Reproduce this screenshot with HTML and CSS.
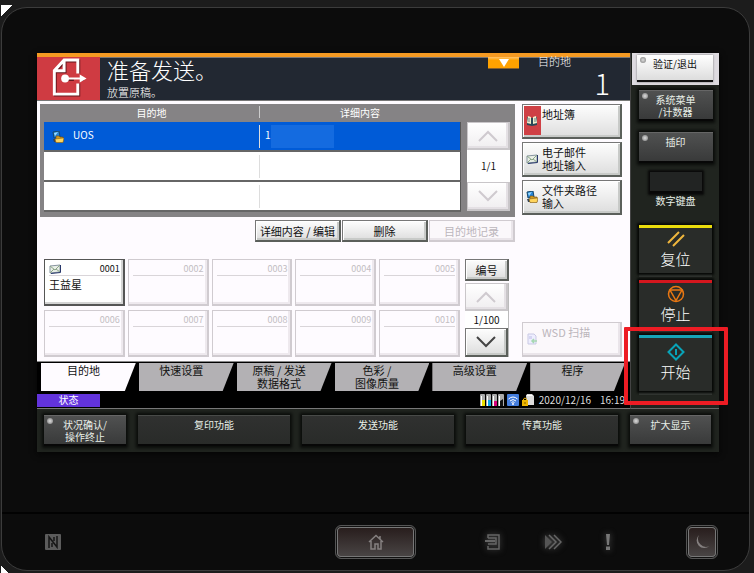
FILE: index.html
```html
<!DOCTYPE html>
<html lang="zh-CN">
<head>
<meta charset="utf-8">
<title>准备发送</title>
<link rel="stylesheet" href="styles.css">
</head>
<body>
<svg class="defs" aria-hidden="true">
  <symbol id="mail" viewBox="0 0 12 10"><path d="M1 2l10-1v7l-10 1z" fill="#e9efe6" stroke="#8794a0"/><path d="M1 2l5 4 5-5M1 9l4-4M11 8L7 5" fill="none" stroke="#8ba588"/><path d="M11.5 1v7.5L2 9.5" fill="none" stroke="#28376b"/></symbol>
  <symbol id="folder" viewBox="0 0 12 12"><path d="M1 1l6-1 1 6-6 1z" fill="#2784d8" stroke="#174768"/><path d="M2 2l4-1-3 4z" fill="#9adcff"/><path d="M1 8h3v3H2z" fill="#354355"/><path d="M4 5h3l1 1h3v5H4z" fill="#d39a1d" stroke="#6f4c10" stroke-width=".6"/><path d="M3 8l8-1 1 0-1 4.500H4z" fill="#ffd55d" stroke="#8a6117" stroke-width=".6"/></symbol>
  <symbol id="up" viewBox="0 0 20 12"><path d="M1 11l9-9 9 9" fill="none" stroke="currentColor" stroke-width="2"/></symbol>
  <symbol id="down" viewBox="0 0 20 12"><path d="M1 1l9 9 9-9" fill="none" stroke="currentColor" stroke-width="2"/></symbol>
</svg>
<main class="device">
  <section class="screen">
    <div class="display">
      <header class="header">
        <svg class="send-icon" viewBox="0 0 63 44" aria-hidden="true"><g transform="translate(1 1)" fill="none" stroke="#65171d" stroke-width="3"><path d="M27 3h14v35H17V14zM27 3v11H17M29 22h17"/></g><path d="M27 3h14v35H17V14zM27 3v11H17" fill="none" stroke="#fff" stroke-width="3"/><path d="M37 17h8v10h-8z" fill="#cf3b42"/><circle cx="28" cy="22" r="4" fill="#fff"/><path d="M28 21h15v-3l7 4-7 4v-3H28z" fill="#fff"/></svg>
        <div class="heading"><h1>准备发送。</h1><p>放置原稿。</p></div>
        <button class="expand" aria-label="展开"><svg viewBox="0 0 10 8"><path d="M0 0h10L5 8z" fill="#fff"/></svg></button>
        <div class="count"><span>目的地</span><strong>1</strong></div>
      </header>
      <div class="content">
        <div class="left">
          <div class="list-panel">
            <table class="list">
              <thead><tr><th>目的地</th><th>详细内容</th></tr></thead>
              <tbody>
                <tr class="selected"><td><svg class="row-icon"><use href="#folder"/></svg>UOS</td><td>1<span class="mask"></span></td></tr>
                <tr><td></td><td></td></tr>
                <tr><td></td><td></td></tr>
              </tbody>
            </table>
            <div class="pager">
              <button class="key faded" aria-label="上一页"><svg class="arrow"><use href="#up"/></svg></button>
              <span>1/1</span>
              <button class="key faded" aria-label="下一页"><svg class="arrow"><use href="#down"/></svg></button>
            </div>
          </div>
          <div class="toolbar">
            <button class="key">详细内容 / 编辑</button><button class="key">删除</button><button class="key off">目的地记录</button>
          </div>
          <div class="book">
            <div class="cells">
              <button class="cell filled"><span class="num"><svg class="cell-icon"><use href="#mail"/></svg>0001</span><span>王益星</span></button>
              <button class="cell"><span class="num">0002</span></button>
              <button class="cell"><span class="num">0003</span></button>
              <button class="cell"><span class="num">0004</span></button>
              <button class="cell"><span class="num">0005</span></button>
              <button class="cell"><span class="num">0006</span></button>
              <button class="cell"><span class="num">0007</span></button>
              <button class="cell"><span class="num">0008</span></button>
              <button class="cell"><span class="num">0009</span></button>
              <button class="cell"><span class="num">0010</span></button>
            </div>
            <div class="book-nav">
              <button class="key">编号</button>
              <div class="pager small">
                <button class="key faded" aria-label="上一页"><svg class="arrow"><use href="#up"/></svg></button>
                <span>1/100</span>
                <button class="key next" aria-label="下一页"><svg class="arrow"><use href="#down"/></svg></button>
              </div>
            </div>
          </div>
        </div>
        <div class="sources">
          <button class="key source address"><svg class="src-icon" viewBox="0 0 12 12"><path d="M1 2l5 1 5-1v8l-5 1-5-1z" fill="#294858"/><path d="M2 1l3 1v7L1 8zM7 2l3-1 1 7-4 1z" fill="#f1eecb"/><path d="M3 3v4M9 3v4" stroke="#627d8b"/></svg><span>地址簿</span></button>
          <button class="key source"><svg class="src-icon"><use href="#mail"/></svg><span>电子邮件<br>地址输入</span></button>
          <button class="key source"><svg class="src-icon"><use href="#folder"/></svg><span>文件夹路径<br>输入</span></button>
          <button class="key source off wsd"><svg class="src-icon" viewBox="0 0 12 12"><path d="M2 1h6l2 2v8H2z" fill="#eef" stroke="#c9c9e4"/><path d="M3 3h3v3H3z" fill="#d5d5f2"/><path d="M11 8H6m2-2L6 8l2 2" fill="none" stroke="#a6d8b1" stroke-width="1.500"/></svg><span>WSD 扫描</span></button>
        </div>
      </div>
      <nav class="tabs">
        <button class="tab current">目的地</button><button class="tab">快速设置</button><button class="tab">原稿 / 发送<br>数据格式</button><button class="tab">色彩 /<br>图像质量</button><button class="tab">高级设置</button><button class="tab">程序</button>
      </nav>
      <div class="status">
        <span class="state">状态</span>
        <svg class="toner" viewBox="0 0 24 12" aria-hidden="true"><path d="M0 1q0-1 1-1h3q1 0 1 1v11H0zM6 1q0-1 1-1h3q1 0 1 1v11H6zM12 1q0-1 1-1h3q1 0 1 1v11h-5zM18 1q0-1 1-1h4q1 0 1 1v11h-6z" fill="#aaa"/><path d="M1 2h1v10H1zM7 2h1v10H7zM13 2h1v10h-1zM19 2h1v10h-1z" fill="#fff"/><path d="M2 6h3v6H2z" fill="#eadf00"/><path d="M8 6h3v6H8z" fill="#0aa9e8"/><path d="M14 7h3v5h-3z" fill="#d5007b"/><path d="M20 7l3-2v7h-3z" fill="#111"/></svg>
        <svg class="wifi" viewBox="0 0 12 12" aria-hidden="true"><rect width="12" height="12" rx="1" fill="#447ddd"/><path d="M1.500 5q4.500-4 9 0M3 7q3-3 6 0M4.500 8.500q1.500-1.500 3 0" fill="none" stroke="#fff"/><circle cx="6" cy="10" r="1" fill="#fff"/></svg>
        <svg class="lock" viewBox="0 0 12 12" aria-hidden="true"><path d="M4 2l1-2h5l2 2v9H5z" fill="#ddd"/><path d="M5 1h5l1 1H4z" fill="#fff"/><rect y="6" width="6" height="6" fill="#efb600"/><path d="M1.500 6V5q1.500-2 3 0v1" fill="none" stroke="#efb600"/><path d="M3 8v2" stroke="#805b00"/></svg>
        <time>2020/12/16</time><time class="clock">16:19</time>
      </div>
    </div>
    <aside class="side">
      <div class="login"><button class="login-key"><i class="lamp"></i>验证/退出</button></div>
      <button class="dark"><i class="lamp"></i>系统菜单<br>/计数器</button>
      <button class="dark insert"><i class="lamp"></i>插印</button>
      <button class="keypad" aria-label="数字键盘"></button>
      <span class="keypad-label">数字键盘</span>
      <button class="action reset"><svg viewBox="0 0 18 18"><path d="M1 13L12 2M6 16L17 5" stroke="#efb63d" stroke-width="2"/></svg>复位</button>
      <button class="action stop"><svg viewBox="0 0 18 18"><circle cx="9" cy="9" r="7.500"/><path d="M3 5h12L9 15.500z"/></svg>停止</button>
      <div class="start-wrap"><button class="action start"><svg viewBox="0 0 18 18"><path d="M9 1.500L16.500 9 9 16.500 1.500 9zM9 6v6"/></svg>开始</button><div class="highlight"></div></div>
    </aside>
    <footer class="functions">
      <button class="dark"><i class="lamp"></i>状况确认/<br>操作终止</button>
      <button class="dark plain">复印功能</button><button class="dark plain">发送功能</button><button class="dark plain">传真功能</button>
      <button class="dark"><i class="lamp"></i>扩大显示</button>
    </footer>
  </section>
  <section class="panel">
    <svg class="hard nfc" viewBox="0 0 16 16" aria-label="NFC"><rect width="16" height="16" rx="1" fill="#5c5c5c"/><path d="M4 14V3l8 10V2M7 13V9M9 3v4" fill="none" stroke="#161616" stroke-width="1.500"/></svg>
    <button class="home" aria-label="主页"><svg viewBox="0 0 16 16"><path d="M1 8l7-6.500L15 8M3 7v8h4v-5h3v5h3V7M12 5V2" fill="none" stroke="#858080" stroke-width="1.500"/></svg></button>
    <div class="hard-group">
      <svg class="hard glow" viewBox="0 0 16 16"><path d="M3 4V1h11v14H3v-3M3 4h8v6H3" fill="none" stroke="#666" stroke-width="1.500"/><path d="M0 7h10" stroke="#666" stroke-width="2"/></svg>
      <svg class="hard wide glow" viewBox="0 0 18 16"><path d="M1 1l7 7-7 7z" fill="#555"/><path d="M5 1l7 7-7 7M10 1l7 7-7 7" fill="none" stroke="#666" stroke-width="1.500"/></svg>
      <svg class="hard narrow glow" viewBox="0 0 6 16"><path d="M1 0h4L4 11H2zM1 12.500h4V16H1z" fill="#777"/></svg>
      <button class="home sleep" aria-label="休眠"><svg viewBox="0 0 16 16"><path d="M5 1A7.500 7.500 0 1 0 15.500 12A8 8 0 0 1 5 1z" fill="#858080"/></svg></button>
    </div>
  </section>
</main>
</body>
</html>
```
FILE: styles.css
```css
* { box-sizing: border-box; }
body { margin: 0; padding: 7px 4px 2px 1px; background: linear-gradient(135deg, #fff 8px, transparent 8px) 1px 5px / 12px 12px no-repeat, linear-gradient(45deg, #fff 5px, transparent 5px) 1px 100% / 10px 10px no-repeat, #1c1c1c; font: 11px/12px "Noto Sans CJK SC", sans-serif; color: #111; }
button { margin: 0; padding: 0; border: 0; font: inherit; color: inherit; display: flex; align-items: center; justify-content: center; }
h1, p { margin: 0; font-weight: 300; }
svg { display: block; flex: none; }
.defs { position: absolute; width: 0; height: 0; }

.device { border: 1px solid #3c3c3c; border-radius: 26px; background: #0c0c0c; padding-top: 45px; overflow: hidden; }
.screen { margin: 0 30px 0 35px; display: grid; grid-template-columns: minmax(0, 1fr) 89px; box-shadow: 0 2px 6px #050505; }

.header { display: flex; height: 48px; border-top: 4px solid #f59a22; border-bottom: 1px solid #777; background: #222832; color: #fff; box-shadow: inset 0 1px #777; }
.send-icon { width: 63px; height: 43px; background: #cf3b42; }
.heading { flex: 1; padding-left: 7px; }
.heading h1 { font-size: 22px; line-height: 24px; }
.heading p { font-size: 11px; line-height: 22px; }
.expand { width: 31px; height: 12px; background: linear-gradient(#ffc36b, #ffa200 30%); border-bottom: 1px solid #876029; }
.expand svg { width: 10px; height: 8px; }
.count { width: 111px; padding: 0 20px 0 19px; display: flex; flex-direction: column; font-weight: 300; }
.count span { line-height: 9px; }
.count strong { align-self: flex-end; font-size: 29px; line-height: 32px; font-weight: 300; }

.content { background: #fefbff; border-bottom: 1px solid #888; padding: 3px 8px 4px 3px; display: grid; grid-template-columns: minmax(0, 1fr) 100px; gap: 7px; }
.list-panel { background: #858385; display: flex; gap: 6px; padding: 0 5px 5px 4px; }
.list { flex: 1; border-collapse: separate; border-spacing: 0; table-layout: fixed; height: 108px; }
.list th { height: 18px; padding: 0; font-weight: 400; font-size: 10px; line-height: 16px; color: #fff; }
.list th + th { background: linear-gradient(#ccc, #ccc) 0 2px / 1px 12px no-repeat; }
.list th:first-child { width: 215px; }
.list td { background: #fff; border-bottom: 2px solid #666; height: 30px; padding: 0 8px; }
.list td + td { background: linear-gradient(#ddd, #ddd) 0 3px / 1px 23px no-repeat, #fff; border-right: 1px solid #555; padding: 0 6px; }
.list .selected td { background-color: #005bd7; color: #fff; font-size: 10px; }
.row-icon { display: inline-block; width: 12px; height: 12px; margin-right: 9px; vertical-align: middle; }
.mask { display: inline-block; width: 63px; height: 23px; background: #146be0; vertical-align: middle; }

.key { background: linear-gradient(#fdfdfd, #ececec 55%, #ddd); border: 1px solid #777; border-right: 2px solid #5b5f5b; border-bottom: 2px solid #5b5f5b; box-shadow: inset 1px 1px #fff, inset -2px -2px #c8cac8; }
.key.faded { background: linear-gradient(#fff, #f0eef0); border-color: #c9c6c9; box-shadow: inset -2px -2px #e4e0e4; color: #cfcacf; }
.key.off { background: #fbf8fb; border-color: #d0cbd0; box-shadow: inset -2px -2px #eae5ea; color: #bcb6bc; }
.key.next { color: #444; }
.arrow { width: 20px; height: 12px; }
.pager { width: 43px; margin-top: 18px; height: 89px; display: grid; grid-template-rows: 28px 1fr 29px; background: #fff; text-align: center; font-size: 10px; align-items: stretch; }
.pager span { align-self: center; }

.toolbar { display: grid; grid-template-columns: repeat(3, 86px); gap: 1px; justify-content: end; margin-top: 3px; }
.toolbar .key { height: 22px; white-space: nowrap; }
.book { display: grid; grid-template-columns: minmax(0, 1fr) 44px; gap: 5px; padding: 0 6px 0 4px; margin-top: 17px; }
.cells { display: grid; grid-template-columns: repeat(5, minmax(0, 1fr)); gap: 4px 3px; }
.cell { height: 47px; padding: 2px 3px 0 4px; flex-direction: column; align-items: stretch; justify-content: flex-start; text-align: left; background: #fefbff; border: 1px solid #d0cbd0; border-right-width: 2px; border-bottom-width: 2px; box-shadow: inset -2px -2px #eee9ee; color: #c3bec3; gap: 2px; }
.cell.filled { border-color: #555; box-shadow: inset -2px -2px #d4d4d4; color: #111; background: #fff; }
.num { display: flex; justify-content: flex-end; align-items: center; height: 14px; font-size: 9px; border-bottom: 1px solid #d9d5d9; }
.cell-icon { width: 12px; height: 10px; margin-right: auto; }
.book-nav { display: flex; flex-direction: column; gap: 2px; }
.book-nav > .key { height: 22px; }
.pager.small { width: auto; margin: 0; height: 74px; grid-template-rows: 28px 1fr 29px; border-right: 1px solid #bbb; }

.sources { display: flex; flex-direction: column; gap: 3px; }
.source { height: 35px; justify-content: flex-start; align-items: flex-start; text-align: left; line-height: 13px; padding: 3px 0 0 3px; gap: 4px; }
.src-icon { width: 12px; height: 12px; margin-top: 7px; }
.address { background: linear-gradient(90deg, #cf4045 18px, transparent 18px), linear-gradient(#fdfdfd, #ececec 55%, #ddd); }
.wsd { margin-top: auto; }

.tabs { background: #000; height: 30px; padding: 1px 5px 1px 4px; display: grid; grid-template-columns: repeat(6, minmax(0, 1fr)); gap: 3px; }
.tab { background: #b3b1b4; align-items: flex-start; line-height: 13px; padding: 1px 10px 0 0; clip-path: polygon(0 0, 100% 0, calc(100% - 11px) 100%, 0 100%); }
.tab.current { background: #fefbff; }
.status { background: #000; height: 17px; color: #ddd; display: flex; align-items: center; gap: 3px; border-bottom: 1px solid #777; padding-right: 5px; font-size: 10px; }
.state { width: 63px; height: 13px; background: #6233dc; color: #fff; text-align: center; line-height: 12px; margin-right: auto; }
.toner { width: 24px; height: 12px; }
.wifi { width: 12px; height: 12px; }
.lock { width: 12px; height: 12px; margin-right: 2px; }
.clock { margin-left: 6px; }

.side { background: #20241f; display: flex; flex-direction: column; align-items: center; color: #fff; padding-left: 1px; border-left: 1px solid #444; border-bottom: 1px solid #666; }
.login { align-self: stretch; background: #dedbe0; height: 32px; padding: 2px 6px 2px 5px; color: #111; margin-bottom: 5px; }
.login-key { position: relative; width: 100%; height: 27px; padding-bottom: 8px; font-size: 10px; background: linear-gradient(#fff, #ddd); border-bottom: 2px solid #111; box-shadow: 0 0 2px #777; }
.lamp { position: absolute; left: 3px; top: 2px; width: 6px; height: 6px; border-radius: 50%; background: radial-gradient(#ddd, #777); }
.dark { position: relative; width: 74px; height: 31px; align-items: flex-start; padding-top: 3px; font-size: 10px; line-height: 12px; color: #e8efe8; background: linear-gradient(#505151, #393a3a); border-top: 1px solid #666; border-bottom: 2px solid #070707; box-shadow: 0 0 3px 2px #090b09; }
.insert { margin: 11px 0 9px; }
.keypad { width: 52px; height: 21px; background: #222423; border-bottom: 2px solid #080808; box-shadow: 0 0 2px 2px #090909; }
.keypad-label { font-size: 10px; line-height: 12px; margin: 2px 0 18px; color: #e8efe8; }
.action { width: 73px; height: 48px; flex-direction: column; justify-content: flex-start; gap: 1px; padding-top: 2px; background: #292c29; border-top: 3px solid; font-size: 15px; line-height: 20px; font-weight: 300; box-shadow: 0 0 2px 2px #070907, 0 4px #343834; color: #fff; }
.action svg { width: 18px; height: 18px; fill: none; }
.reset { border-top-color: #eadd0c; margin-bottom: 7px; }
.stop { border-top-color: #d4171e; margin-bottom: 7px; }
.stop svg { stroke: #e97712; stroke-width: 1.5; }
.start { border-top-color: #16a5b7; height: 56px; padding-top: 5px; }
.start svg { stroke: #08a4b8; stroke-width: 2; }
.start-wrap { position: relative; }
.highlight { position: absolute; inset: -8px -16px -14px -15px; border: 4px solid #ed1c24; border-radius: 1px; pointer-events: none; }

.functions { grid-column: 1 / -1; background: #20241f; height: 43px; padding: 6px 8px 6px 7px; display: grid; grid-template-columns: 82px repeat(3, minmax(0, 1fr)) 81px; gap: 12px; }
.functions .dark { width: auto; }
.functions .plain { background: linear-gradient(#303130, #292b29); border-top-color: #484a48; }

.panel { margin-top: 60px; border-top: 2px solid #020202; height: 58px; padding: 0 31px; display: grid; grid-template-columns: minmax(0, 1fr) 81px minmax(0, 1fr); align-items: center; }
.hard { width: 16px; height: 16px; }
.nfc { margin-left: 12px; }
.wide { width: 18px; }
.narrow { width: 6px; }
.glow { filter: drop-shadow(0 0 3px #555); }
.home { height: 34px; border: 1px solid #555; border-radius: 6px; background: linear-gradient(#261b1a, #4b4747) padding-box; box-shadow: inset 0 0 0 1px #111, inset 0 0 0 2px #777; }
.home svg { width: 16px; height: 16px; }
.hard-group { display: flex; align-items: center; gap: 43px; padding-left: 69px; }
.sleep { width: 32px; flex: none; margin-left: auto; }
.hard-group .sleep { margin-left: auto; }
```
